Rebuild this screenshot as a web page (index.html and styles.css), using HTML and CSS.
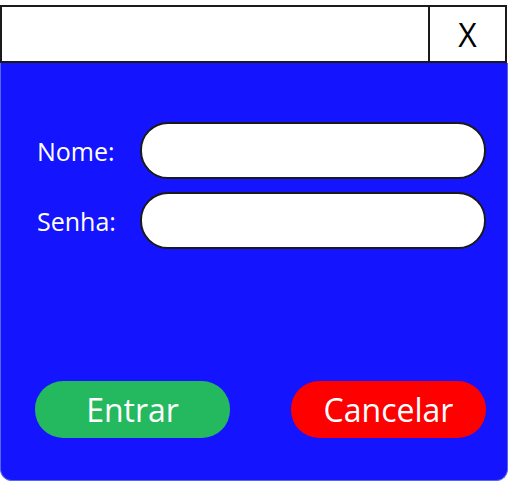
FILE: index.html
```html
<!DOCTYPE html>
<html lang="pt">
<head>
<meta charset="utf-8">
<title>Login</title>
<link rel="stylesheet" href="styles.css">
</head>
<body>
<div class="window">
  <div class="titlebar">
    <div class="title"></div>
    <div class="close">X</div>
  </div>
  <div class="panel">
    <div class="form">
      <div class="row">
        <label class="label">Nome:</label>
        <div class="field"></div>
      </div>
      <div class="row">
        <label class="label">Senha:</label>
        <div class="field"></div>
      </div>
    </div>
    <div class="actions">
      <div class="btn btn-ok">Entrar</div>
      <div class="btn btn-cancel">Cancelar</div>
    </div>
  </div>
</div>
</body>
</html>
```
FILE: styles.css
```css
html, body {
  margin: 0;
  padding: 0;
  background: #ffffff;
}
.window {
  width: 508px;
  height: 481px;
  display: flex;
  flex-direction: column;
  font-family: "Open Sans", "Noto Sans", sans-serif;
  box-sizing: border-box;
  padding-top: 5px;
}
.titlebar {
  height: 58px;
  box-sizing: border-box;
  border: 2px solid #1a1a1a;
  margin-right: 1px;
  display: flex;
  background: #fff;
}
.title {
  flex: 1;
}
.close {
  width: 77px;
  box-sizing: border-box;
  border-left: 2px solid #1a1a1a;
  display: flex;
  align-items: center;
  justify-content: center;
  font-size: 32px;
  color: #000;
  font-weight: 400;
}
.panel {
  flex: 1;
  background: #1414ff;
  border: 1px solid #5568e6;
  border-top: none;
  border-radius: 0 0 12px 12px;
  display: flex;
  flex-direction: column;
  justify-content: space-between;
  padding: 59px 21px 42px 34px;
}
.form {
  display: flex;
  flex-direction: column;
  gap: 13px;
}
.row {
  display: flex;
  align-items: center;
}
.label {
  width: 105px;
  box-sizing: border-box;
  color: #fff;
  font-size: 25px;
  font-weight: 500;
  padding-left: 2px;
}
.field {
  flex: 1;
  height: 57px;
  box-sizing: border-box;
  background: #fff;
  border: 2px solid #1a1a1a;
  border-radius: 28px;
}
.actions {
  display: flex;
  justify-content: space-between;
}
.btn {
  width: 195px;
  height: 57px;
  border-radius: 28px;
  display: flex;
  align-items: center;
  justify-content: center;
  color: #fff;
  font-size: 32px;
  font-weight: 500;
}
.btn-ok {
  background: #24b95f;
}
.btn-cancel {
  background: #ff0000;
}
```
